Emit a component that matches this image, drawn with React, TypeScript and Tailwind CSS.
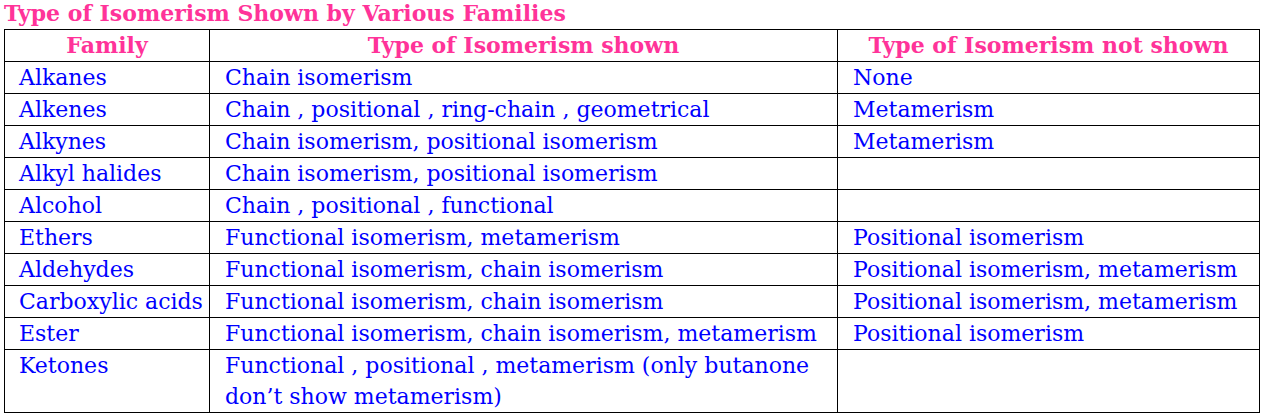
const rows: [string, string[], string][] = [
  ["Alkanes", ["Chain isomerism"], "None"],
  ["Alkenes", ["Chain , positional , ring-chain , geometrical"], "Metamerism"],
  ["Alkynes", ["Chain isomerism, positional isomerism"], "Metamerism"],
  ["Alkyl halides", ["Chain isomerism, positional isomerism"], ""],
  ["Alcohol", ["Chain , positional , functional"], ""],
  ["Ethers", ["Functional isomerism, metamerism"], "Positional isomerism"],
  ["Aldehydes", ["Functional isomerism, chain isomerism"], "Positional isomerism, metamerism"],
  ["Carboxylic acids", ["Functional isomerism, chain isomerism"], "Positional isomerism, metamerism"],
  ["Ester", ["Functional isomerism, chain isomerism, metamerism"], "Positional isomerism"],
  ["Ketones", ["Functional , positional , metamerism (only butanone", "don\u2019t show metamerism)"], ""],
];

export default function App() {
  return (
    <div className="w-[1263px] h-[418px] bg-white px-[4px] font-['DejaVu_Serif',serif]">
      <h1 className="h-[29px] text-[22px] leading-[26px] font-bold text-[#ff3399]">
        Type of Isomerism Shown by Various Families
      </h1>
      <table className="w-[1255px] border-collapse table-fixed text-[22px] leading-[31px]">
        <colgroup>
          <col className="w-[205px]" />
          <col className="w-[628px]" />
          <col className="w-[422px]" />
        </colgroup>
        <thead>
          <tr className="text-[#ff3399] font-bold">
            <th className="border border-black h-[32px] p-0">Family</th>
            <th className="border border-black h-[32px] p-0">Type of Isomerism shown</th>
            <th className="border border-black h-[32px] p-0">Type of Isomerism not shown</th>
          </tr>
        </thead>
        <tbody className="text-[#0000ff]">
          {rows.map(([family, shown, notShown]) => (
            <tr key={family}>
              <td className="border border-black align-top pl-[14px] p-0 h-[32px] whitespace-nowrap">{family}</td>
              <td className="border border-black align-top pl-[15px] p-0 whitespace-nowrap">
                {shown.map((line) => (
                  <div key={line}>{line}</div>
                ))}
              </td>
              <td className="border border-black align-top pl-[15px] p-0 whitespace-nowrap">{notShown}</td>
            </tr>
          ))}
        </tbody>
      </table>
    </div>
  );
}
